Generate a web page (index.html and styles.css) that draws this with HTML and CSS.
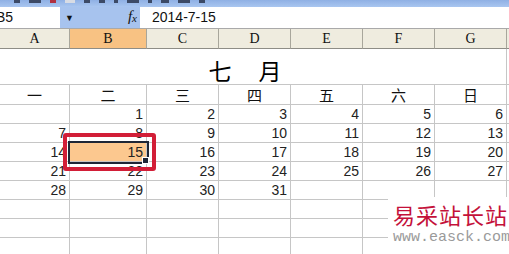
FILE: index.html
```html
<!DOCTYPE html>
<html lang="zh-CN">
<head>
    <meta charset="UTF-8">
    <title>七月日历</title>
    <link rel="stylesheet" href="styles.css">
</head>
<body>
    <div class="toolbar">
        <span class="tb-icon" style="width:6px"></span>
        <span class="tb-icon" style="width:12px"></span>
        <span class="tb-icon red" style="width:6px"></span>
        <span class="tb-icon light" style="width:10px"></span>
        <span class="tb-icon" style="width:6px"></span>
        <span class="tb-icon" style="width:6px"></span>
        <span class="tb-icon" style="width:4px"></span>
        <span class="tb-icon" style="width:12px"></span>
        <span class="tb-icon" style="width:4px"></span>
        <span class="tb-icon" style="width:8px"></span>
        <span class="tb-icon" style="width:12px"></span>
        <span class="tb-icon" style="width:6px"></span>
    </div>

    <div class="formula-bar">
        <div class="name-box"><span>B5</span></div>
        <div class="name-drop">
            <span class="arrow">&#9660;</span>
            <span class="fx">f<sub>x</sub></span>
        </div>
        <div class="formula-input">2014-7-15</div>
    </div>

    <div class="sheet">
        <div class="row col-headers">
            <div class="cell c1">A</div>
            <div class="cell c2 active">B</div>
            <div class="cell c3">C</div>
            <div class="cell c3">D</div>
            <div class="cell c3">E</div>
            <div class="cell c3">F</div>
            <div class="cell c3">G</div>
            <div class="cell rest"></div>
        </div>

        <div class="row title-row">
            <div class="title"><span>七</span><span>月</span></div>
            <div class="cell rest"></div>
        </div>

        <div class="row week-row">
            <div class="cell c1">一</div>
            <div class="cell c2">二</div>
            <div class="cell c3">三</div>
            <div class="cell c3">四</div>
            <div class="cell c3">五</div>
            <div class="cell c3">六</div>
            <div class="cell c3">日</div>
            <div class="cell rest"></div>
        </div>

        <div class="row day-row">
            <div class="cell c1"></div>
            <div class="cell c2">1</div>
            <div class="cell c3">2</div>
            <div class="cell c3">3</div>
            <div class="cell c3">4</div>
            <div class="cell c3">5</div>
            <div class="cell c3">6</div>
            <div class="cell rest"></div>
        </div>
        <div class="row day-row">
            <div class="cell c1">7</div>
            <div class="cell c2">8</div>
            <div class="cell c3">9</div>
            <div class="cell c3">10</div>
            <div class="cell c3">11</div>
            <div class="cell c3">12</div>
            <div class="cell c3">13</div>
            <div class="cell rest"></div>
        </div>
        <div class="row day-row">
            <div class="cell c1">14</div>
            <div class="cell c2 selected">15</div>
            <div class="cell c3">16</div>
            <div class="cell c3">17</div>
            <div class="cell c3">18</div>
            <div class="cell c3">19</div>
            <div class="cell c3">20</div>
            <div class="cell rest"></div>
        </div>
        <div class="row day-row">
            <div class="cell c1">21</div>
            <div class="cell c2">22</div>
            <div class="cell c3">23</div>
            <div class="cell c3">24</div>
            <div class="cell c3">25</div>
            <div class="cell c3">26</div>
            <div class="cell c3">27</div>
            <div class="cell rest"></div>
        </div>
        <div class="row day-row">
            <div class="cell c1">28</div>
            <div class="cell c2">29</div>
            <div class="cell c3">30</div>
            <div class="cell c3">31</div>
            <div class="cell c3"></div>
            <div class="cell c3"></div>
            <div class="cell c3"></div>
            <div class="cell rest"></div>
        </div>
        <div class="row day-row">
            <div class="cell c1"></div>
            <div class="cell c2"></div>
            <div class="cell c3"></div>
            <div class="cell c3"></div>
            <div class="cell c3"></div>
            <div class="cell c3"></div>
            <div class="cell c3"></div>
            <div class="cell rest"></div>
        </div>
        <div class="row day-row">
            <div class="cell c1"></div>
            <div class="cell c2"></div>
            <div class="cell c3"></div>
            <div class="cell c3"></div>
            <div class="cell c3"></div>
            <div class="cell c3"></div>
            <div class="cell c3"></div>
            <div class="cell rest"></div>
        </div>
        <div class="row day-row">
            <div class="cell c1"></div>
            <div class="cell c2"></div>
            <div class="cell c3"></div>
            <div class="cell c3"></div>
            <div class="cell c3"></div>
            <div class="cell c3"></div>
            <div class="cell c3"></div>
            <div class="cell rest"></div>
        </div>

        <div class="mark-box"></div>

        <div class="watermark">
            <div class="wm-name">易采站长站</div>
            <div class="wm-url">www.easck.com</div>
        </div>
    </div>
</body>
</html>
```

FILE: styles.css
```css
body {
    margin: 0;
    width: 509px;
    height: 254px;
    overflow: hidden;
    background-color: #ffffff;
    font-family: 'Liberation Sans', sans-serif;
    color: #111;
}

/* toolbar remnant at the top */
.toolbar {
    height: 7px;
    background: linear-gradient(#8fb0e4, #a9c6f0);
    display: flex;
    gap: 9px;
    padding-left: 14px;
    box-sizing: border-box;
}

.tb-icon {
    height: 3px;
    background-color: #3c4a66;
}

.tb-icon.red {
    background-color: #b03040;
}

.tb-icon.light {
    background-color: #d8dce4;
}

/* formula bar */
.formula-bar {
    display: flex;
    height: 21px;
    border-bottom: 1px solid #a9a9a9;
}

.name-box {
    width: 60px;
    background-color: #fff;
    overflow: hidden;
    font-size: 14px;
    line-height: 21px;
}

.name-box span {
    margin-left: -4px;
}

.name-drop {
    width: 80px;
    background-color: #a7c3ee;
    display: flex;
    justify-content: space-between;
    align-items: center;
    padding: 0 3px 0 5px;
    box-sizing: border-box;
}

.arrow {
    font-size: 9px;
    color: #111;
}

.fx {
    font-family: 'Liberation Serif', serif;
    font-style: italic;
    font-size: 15px;
    line-height: 15px;
}

.fx sub {
    font-size: 11px;
    vertical-align: -1px;
}

.formula-input {
    flex: 1;
    background-color: #fff;
    padding-left: 12px;
    font-size: 14px;
    line-height: 21px;
}

/* sheet grid */
.sheet {
    position: relative;
}

.row {
    display: flex;
}

.cell {
    box-sizing: border-box;
    border-right: 1px solid #c6c6c6;
    border-bottom: 1px solid #c6c6c6;
    flex-shrink: 0;
}

.c1 { width: 70px; }
.c2 { width: 77px; }
.c3 { width: 72px; }
.rest { flex: 1; border-right: none; }

.col-headers .cell {
    height: 20px;
    background-color: #efecdf;
    border-right-color: #a8a69b;
    border-bottom-color: #8e8d86;
    font-family: 'Liberation Serif', serif;
    font-size: 14px;
    line-height: 20px;
    text-align: center;
}

.col-headers .cell.active {
    background-color: #f8c283;
}

.title-row {
    height: 36px;
}

.title {
    width: 507px;
    box-sizing: border-box;
    border-right: 1px solid #c6c6c6;
    border-bottom: 1px solid #c6c6c6;
    display: flex;
    justify-content: center;
    align-items: flex-end;
    gap: 27px;
    padding-right: 16px;
    font-family: 'Noto Sans CJK SC', sans-serif;
    font-size: 23px;
    line-height: 28px;
    color: #000;
}

.title-row .rest {
    height: 36px;
}

.week-row .cell {
    height: 20px;
    text-align: center;
    font-family: 'Noto Sans CJK SC', sans-serif;
    font-size: 15px;
    line-height: 19px;
}

.day-row .cell {
    height: 19px;
    text-align: right;
    padding-right: 3px;
    font-size: 14px;
    line-height: 18px;
    color: #222;
}

.day-row .cell.selected {
    position: relative;
    background-color: #fcc88f;
    outline: 2px solid #1e2636;
    outline-offset: 0;
}

.day-row .cell.selected::after {
    content: '';
    position: absolute;
    right: -3px;
    bottom: -3px;
    width: 5px;
    height: 5px;
    background-color: #1e2636;
    border: 1px solid #fff;
}

/* red annotation box */
.mark-box {
    position: absolute;
    left: 63px;
    top: 104px;
    width: 93px;
    height: 38px;
    box-sizing: border-box;
    border: 4px solid #d21e37;
    border-radius: 3px;
}

/* site watermark */
.watermark {
    position: absolute;
    left: 388px;
    top: 168px;
    width: 121px;
    height: 58px;
    overflow: hidden;
    background-color: #fff;
    padding: 3px 0 0 5px;
    box-sizing: border-box;
}

.wm-name {
    font-family: 'Noto Sans CJK SC', sans-serif;
    font-size: 22px;
    line-height: 28px;
    letter-spacing: 1px;
    color: #c4113a;
    white-space: nowrap;
}

.wm-url {
    font-family: 'Liberation Mono', monospace;
    font-size: 15px;
    line-height: 20px;
    color: #9a9a9a;
    white-space: nowrap;
}
```
